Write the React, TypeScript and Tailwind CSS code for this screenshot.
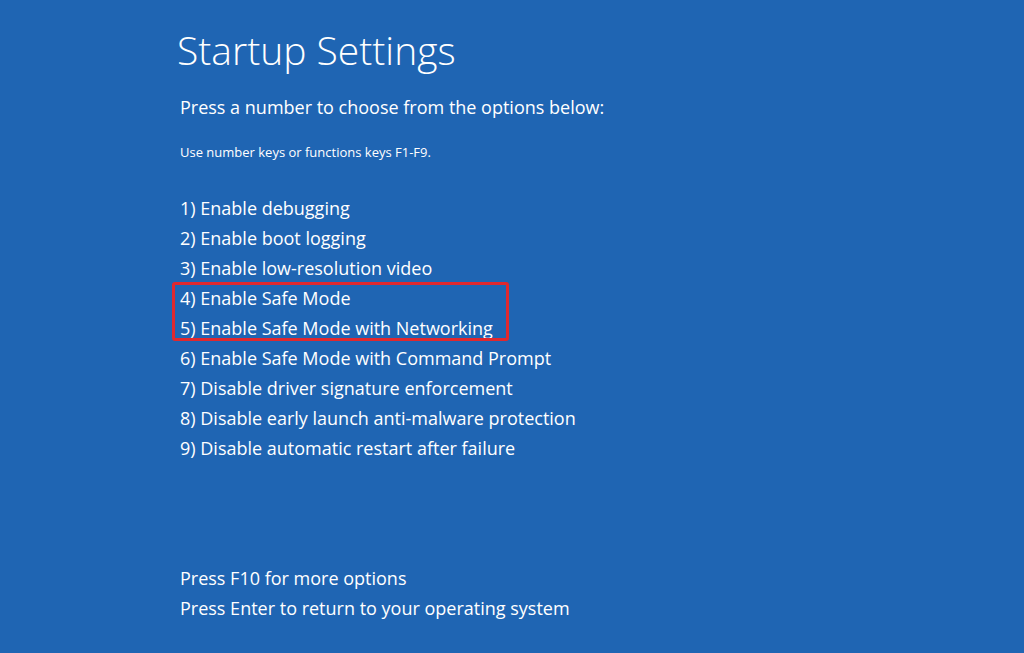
import React from "react";

const items = [
  "1) Enable debugging",
  "2) Enable boot logging",
  "3) Enable low-resolution video",
  "4) Enable Safe Mode",
  "5) Enable Safe Mode with Networking",
  "6) Enable Safe Mode with Command Prompt",
  "7) Disable driver signature enforcement",
  "8) Disable early launch anti-malware protection",
  "9) Disable automatic restart after failure",
];

export default function App() {
  const font = { fontFamily: '"Open Sans", "Noto Sans", sans-serif' };
  return (
    <div
      className="w-[1024px] h-[653px] bg-[#1f65b3] text-white overflow-hidden flex flex-col pl-[180px]"
      style={font}
    >
      <h1 className="text-[39px] leading-[50px] mt-[25px] -ml-[3px] font-light">Startup Settings</h1>
      <p className="text-[18px] leading-[30px] mt-[17px]">Press a number to choose from the options below:</p>
      <p className="text-[13px] leading-[20px] mt-[20px]">Use number keys or functions keys F1-F9.</p>
      <div className="mt-[31px] flex flex-col">
        {items.slice(0, 3).map((t) => (
          <div key={t} className="text-[18px] leading-[30px]">{t}</div>
        ))}
        <div className="relative">
          {items.slice(3, 5).map((t) => (
            <div key={t} className="text-[18px] leading-[30px]">{t}</div>
          ))}
          <div className="absolute -top-[1px] -left-[8px] w-[337px] h-[59px] border-[3px] border-[#e0282e] rounded-[3px]" />
        </div>
        {items.slice(5).map((t) => (
          <div key={t} className="text-[18px] leading-[30px]">{t}</div>
        ))}
      </div>
      <div className="mt-[100px] flex flex-col">
        <div className="text-[18px] leading-[30px]">Press F10 for more options</div>
        <div className="text-[18px] leading-[30px]">Press Enter to return to your operating system</div>
      </div>
    </div>
  );
}
